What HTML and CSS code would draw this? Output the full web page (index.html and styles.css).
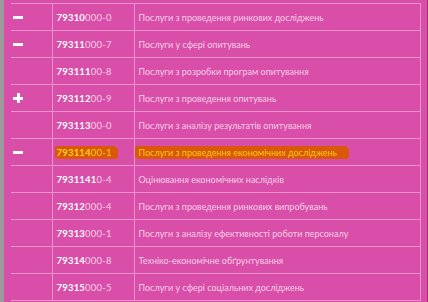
FILE: index.html
```html
<!DOCTYPE html>
<html lang="uk">

<head>
    <meta charset="UTF-8">
    <meta name="viewport" content="width=device-width, initial-scale=1.0" />
    <title>Класифікатор ДК 021:2015</title>
    <link rel="stylesheet" href="styles.css">
</head>

<body>
    <div id="frame">
        <table class="tree">
            <tr>
                <td class="toggle"><span class="minus"></span></td>
                <td class="code"><b>79310</b>000-0</td>
                <td class="name">Послуги з проведення ринкових досліджень</td>
            </tr>
            <tr>
                <td class="toggle"><span class="minus"></span></td>
                <td class="code"><b>79311</b>000-7</td>
                <td class="name">Послуги у сфері опитувань</td>
            </tr>
            <tr>
                <td class="toggle"></td>
                <td class="code"><b>793111</b>00-8</td>
                <td class="name">Послуги з розробки програм опитування</td>
            </tr>
            <tr>
                <td class="toggle"><span class="plus"></span></td>
                <td class="code"><b>793112</b>00-9</td>
                <td class="name">Послуги з проведення опитувань</td>
            </tr>
            <tr>
                <td class="toggle"></td>
                <td class="code"><b>793113</b>00-0</td>
                <td class="name">Послуги з аналізу результатів опитування</td>
            </tr>
            <tr class="found">
                <td class="toggle"><span class="minus"></span></td>
                <td class="code"><span class="mark"><b>793114</b>00-1</span></td>
                <td class="name"><span class="mark">Послуги з проведення економічних досліджень</span></td>
            </tr>
            <tr>
                <td class="toggle"></td>
                <td class="code"><b>7931141</b>0-4</td>
                <td class="name">Оцінювання економічних наслідків</td>
            </tr>
            <tr>
                <td class="toggle"></td>
                <td class="code"><b>79312</b>000-4</td>
                <td class="name">Послуги з проведення ринкових випробувань</td>
            </tr>
            <tr>
                <td class="toggle"></td>
                <td class="code"><b>79313</b>000-1</td>
                <td class="name">Послуги з аналізу ефективності роботи персоналу</td>
            </tr>
            <tr>
                <td class="toggle"></td>
                <td class="code"><b>79314</b>000-8</td>
                <td class="name">Техніко-економічне обґрунтування</td>
            </tr>
            <tr>
                <td class="toggle"></td>
                <td class="code"><b>79315</b>000-5</td>
                <td class="name">Послуги у сфері соціальних досліджень</td>
            </tr>
        </table>
    </div>
</body>

</html>
```

FILE: styles.css
```css
* {
    margin: 0;
    padding: 0;
    box-sizing: border-box;
}

html,
body {
    height: 100%;
}

body {
    background-color: #D94EA8;
    font-family: 'Lato', 'Open Sans', sans-serif;
    font-size: 9px;
    color: #F4CFE7;
    border-left: 4px solid #9C9A9B;
    border-right: 1px solid #A3307C;
    overflow: hidden;
}

#frame {
    padding: 3px 0 0 7px;
}

.tree {
    width: 410px;
    border-collapse: collapse;
    table-layout: fixed;
}

.tree td {
    height: 27px;
    border-top: 1px solid #EA92CC;
    border-bottom: 1px solid #EA92CC;
    white-space: nowrap;
    vertical-align: middle;
}

.tree td + td {
    border-left: 1px solid #EA92CC;
}

.tree td:last-child {
    border-right: 1px solid #EA92CC;
}

.toggle {
    width: 41px;
    padding-left: 2px;
}

.code {
    width: 82px;
    padding-left: 4px;
    font-size: 9.5px;
    letter-spacing: 0.2px;
}

.code b {
    color: #FFFFFF;
    font-weight: 700;
}

.name {
    padding-left: 4px;
}

/* expand / collapse markers */
.minus,
.plus {
    display: block;
    position: relative;
    width: 10px;
    height: 10px;
}

.minus::before,
.plus::before,
.plus::after {
    content: "";
    position: absolute;
    background-color: #FFFFFF;
}

.minus::before,
.plus::before {
    left: 0;
    top: 4px;
    width: 10px;
    height: 3px;
}

.plus::after {
    left: 4px;
    top: 0;
    width: 3px;
    height: 10px;
}

/* search hit, drawn like a marker stroke */
.found .mark {
    display: inline-block;
    background-color: #DA580A;
    color: #F6C814;
    padding: 1px 6px 1px 2px;
    margin-left: -2px;
    border-radius: 2px 5px 3px 4px;
}

.found .mark b {
    color: #FFD21A;
}

.found .name .mark {
    padding-right: 12px;
    margin-left: -4px;
    padding-left: 4px;
}
```
